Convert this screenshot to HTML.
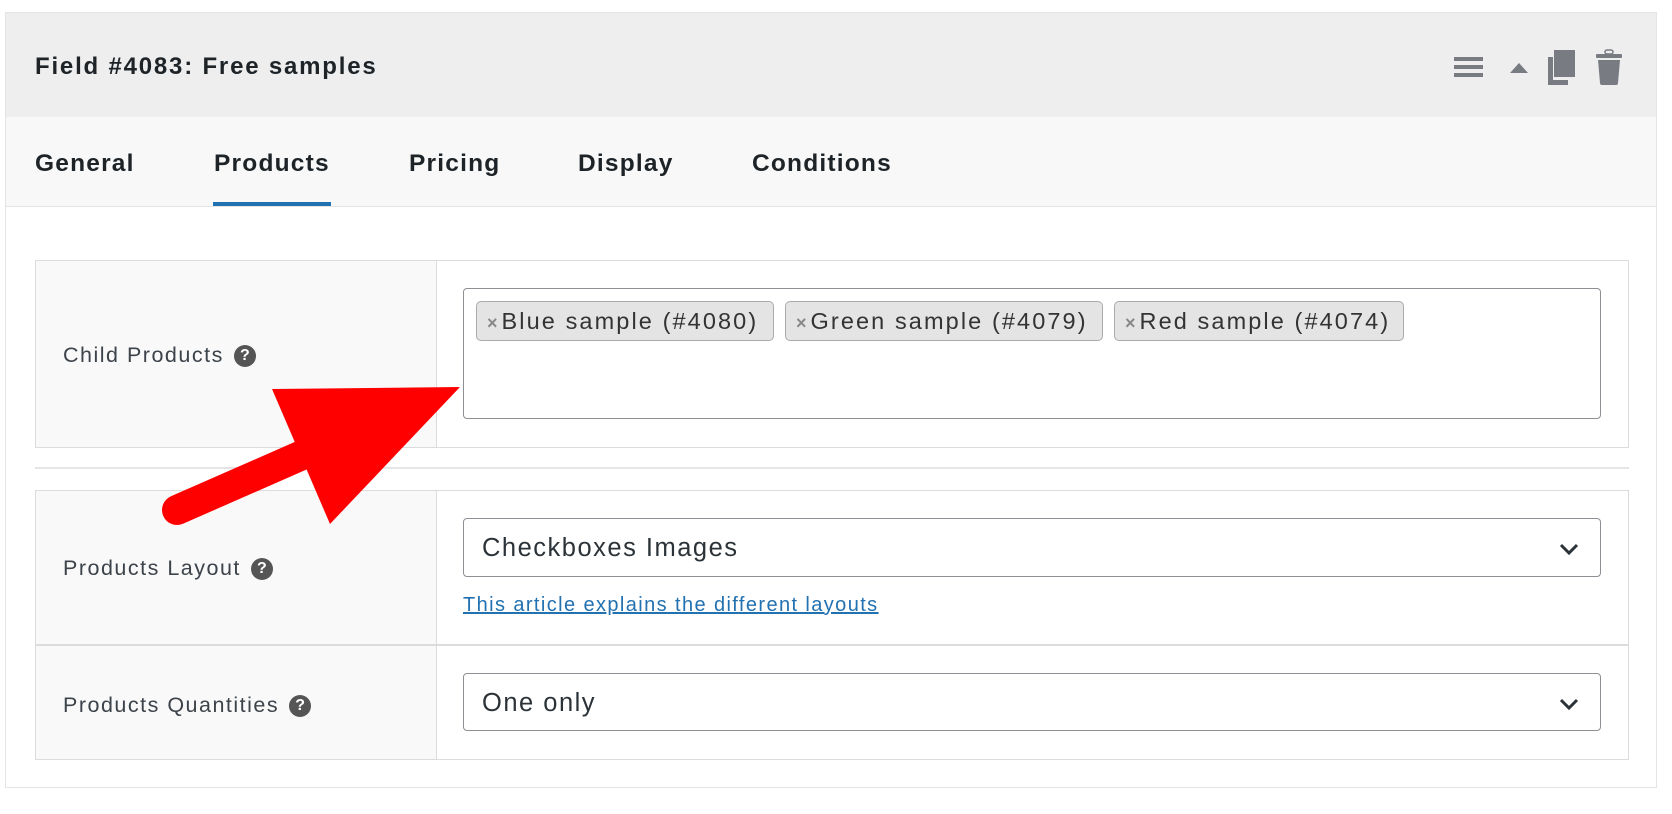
<!DOCTYPE html>
<html><head><meta charset="utf-8"><style>
*{box-sizing:border-box;margin:0;padding:0}
body{width:1672px;height:814px;background:#fff;font-family:"Liberation Sans",Arial,sans-serif;position:relative;overflow:hidden;color:#1d2327}
.abs{position:absolute}
.panel{left:5px;top:12px;width:1652px;height:776px;border:1px solid #e2e4e7;background:#fff}
.hdr{left:6px;top:13px;width:1650px;height:104px;background:#eeeeef}
.tabs{left:6px;top:117px;width:1650px;height:90px;background:#f8f8f8;border-bottom:1px solid #e5e5e5}
.title{left:35px;top:53px;font-size:24px;font-weight:bold;letter-spacing:1.8px}
.tab{top:150px;font-size:24.5px;font-weight:bold;letter-spacing:1.2px}
.tbl{border:1.5px solid #dcdcde;background:#fff}
.lab{background:#f9f9f9;border-right:1.5px solid #dcdcde}
.lt{font-size:21.5px;color:#3c434a;letter-spacing:1.5px}
.q{display:inline-block;width:22px;height:22px;border-radius:50%;background:#555;color:#fff;font-size:16px;font-weight:bold;text-align:center;line-height:22px;vertical-align:2px;margin-left:10px;letter-spacing:0}
.box{border:1.5px solid #8c8f94;border-radius:4px;background:#fff}
.tag{top:301px;height:40px;border:1.5px solid #aaa;border-radius:5px;background:#e4e4e4;font-size:23.5px;line-height:39px;color:#333;padding-left:10px;letter-spacing:2.1px;white-space:nowrap}
.tag b{color:#888;font-size:18px;margin-right:4px;letter-spacing:0}
.sel{font-size:25.5px;color:#2c3338;padding-left:18px;line-height:59px;letter-spacing:1.5px}
</style></head><body>
<div class="abs panel"></div>
<div class="abs hdr"></div>
<div class="abs tabs"></div>
<div class="abs title">Field #4083: Free samples</div>
<div class="abs tab" style="left:35px">General</div>
<div class="abs tab" style="left:214px">Products</div>
<div class="abs tab" style="left:409px">Pricing</div>
<div class="abs tab" style="left:578px">Display</div>
<div class="abs tab" style="left:752px">Conditions</div>
<div class="abs" style="left:213px;top:202px;width:118px;height:4px;background:#2271b1"></div>
<svg class="abs" style="left:1440px;top:45px" width="200" height="45" viewBox="0 0 200 45" fill="#787c82">
<rect x="14" y="12" width="29" height="4"/><rect x="14" y="20" width="29" height="4"/><rect x="14" y="28" width="29" height="4"/>
<polygon points="70,28 79,18 88,28"/>
<rect x="114" y="5" width="21" height="27"/><rect x="108" y="12" width="5" height="28"/><rect x="108" y="35" width="20" height="5"/>
<rect x="156" y="9" width="26" height="4" rx="1"/><rect x="165" y="5" width="8" height="4" rx="2" fill="none" stroke="#787c82" stroke-width="1.5"/>
<path d="M158 15 H180 L178 38 Q178 40 176 40 H162 Q160 40 160 38 Z"/>
</svg>
<div class="abs tbl" style="left:35px;top:260px;width:1594px;height:188px"></div>
<div class="abs lab" style="left:36px;top:261px;width:401px;height:186px"></div>
<div class="abs lt" style="left:63px;top:343px">Child Products<span class="q">?</span></div>
<div class="abs box" style="left:463px;top:288px;width:1138px;height:131px"></div>
<div class="abs tag" style="left:476px;width:298px"><b>×</b>Blue sample (#4080)</div>
<div class="abs tag" style="left:785px;width:318px"><b>×</b>Green sample (#4079)</div>
<div class="abs tag" style="left:1114px;width:290px"><b>×</b>Red sample (#4074)</div>
<div class="abs" style="left:35px;top:467px;width:1594px;height:1.5px;background:#e5e5e5"></div>
<div class="abs tbl" style="left:35px;top:490px;width:1594px;height:270px"></div>
<div class="abs lab" style="left:36px;top:491px;width:401px;height:268px"></div>
<div class="abs" style="left:36px;top:644px;width:1592px;height:1.5px;background:#dcdcde"></div>
<div class="abs lt" style="left:63px;top:556px">Products Layout<span class="q">?</span></div>
<div class="abs lt" style="left:63px;top:693px">Products Quantities<span class="q">?</span></div>
<div class="abs box sel" style="left:463px;top:518px;width:1138px;height:59px">Checkboxes Images</div>
<div class="abs" style="left:463px;top:594px;font-size:20px;color:#2271b1;text-decoration:underline;letter-spacing:1.4px">This article explains the different layouts</div>
<div class="abs box sel" style="left:463px;top:673px;width:1138px;height:58px">One only</div>
<svg class="abs" style="left:1555px;top:533px" width="30" height="200" fill="none" stroke="#2c3338" stroke-width="3"><path d="M6 12 L14 20 L22 12"/><path d="M6 167 L14 175 L22 167"/></svg>
<svg class="abs" style="left:0;top:0" width="1672" height="814">
<line x1="300" y1="456" x2="177" y2="510" stroke="#ff0000" stroke-width="30" stroke-linecap="round"/>
<polygon points="272,389 460,387 330,524" fill="#ff0000"/>
</svg>
</body></html>
